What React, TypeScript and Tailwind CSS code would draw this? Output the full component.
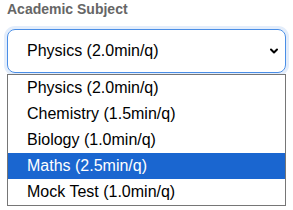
import { ChevronDown } from 'lucide-react';

const options = [
  'Physics (2.0min/q)',
  'Chemistry (1.5min/q)',
  'Biology (1.0min/q)',
  'Maths (2.5min/q)',
  'Mock Test (1.0min/q)',
];

export default function App() {
  const active = 3;
  return (
    <div className="w-[293px] h-[210px] bg-white px-[7px] font-['Liberation_Sans',Arial,sans-serif] overflow-hidden">
      {/* Label */}
      <div className="pt-[1px] h-[29px] text-[14px] leading-[17px] font-bold text-[#666666]">
        Academic Subject
      </div>

      {/* Select (focused) */}
      <div className="w-[279px] h-[44px] rounded-[8px] border border-[#4a8ee6] ring-[3px] ring-[#e3edfb] flex items-center justify-between pl-[19px] pr-[5px] text-[16px] text-black">
        <span>Physics (2.0min/q)</span>
        <ChevronDown className="w-[12px] h-[12px] stroke-[4]" />
      </div>

      {/* Open listbox */}
      <div className="w-[279px] mt-[1px] border border-[#767676] bg-white">
        {options.map((o, i) => (
          <div
            key={o}
            className={`h-[26px] flex items-center pl-[19px] text-[16px] ${
              i === active ? 'bg-[#1a66d0] text-white' : 'text-black'
            }`}
          >
            {o}
          </div>
        ))}
      </div>
    </div>
  );
}
